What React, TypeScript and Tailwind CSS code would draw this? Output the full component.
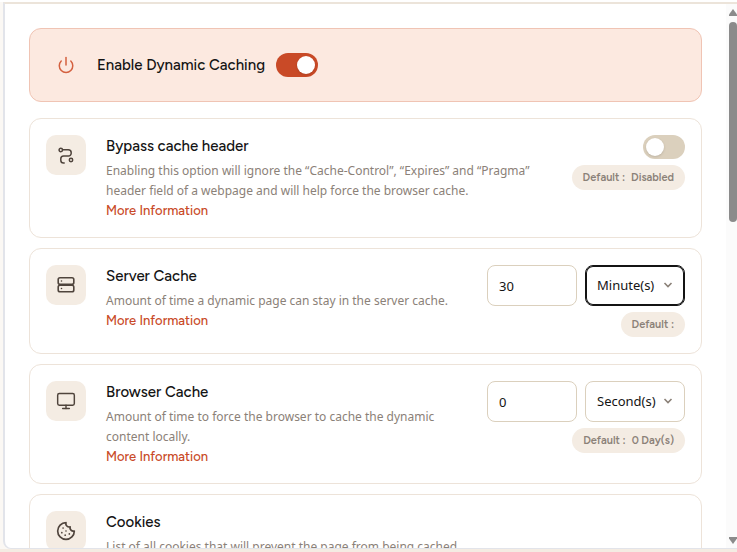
import React, { useState } from 'react';
import { Cookie, Monitor, Power } from 'lucide-react';

interface SettingCardProps {
  icon: React.ReactNode;
  title: string;
  description: string;
  children?: React.ReactNode;
}

const SettingCard: React.FC<SettingCardProps> = ({ icon, title, description, children }) => (
  <section className="flex items-start rounded-xl border border-[#ede3d9] bg-white p-4">
    <div className="flex size-10 shrink-0 items-center justify-center rounded-[10px] bg-[#f4ece3] text-[#4f443c]">
      {icon}
    </div>
    <div className="ml-5 min-w-0 flex-1">
      <h2 className="mb-1 font-[Figtree,Inter,sans-serif] text-[15px] leading-[22px] font-medium text-[#141414]">{title}</h2>
      <p className="font-['Noto_Sans',sans-serif] text-xs leading-5 text-[#8b8178]">{description}</p>
      <a href="#" className="block font-[Figtree,Inter,sans-serif] text-[13px] leading-5 font-medium text-[#c94a27]">
        More Information
      </a>
    </div>
    {children}
  </section>
);

interface ToggleProps {
  label: string;
  checked: boolean;
  onChange: (value: boolean) => void;
}

const Toggle: React.FC<ToggleProps> = ({ label, checked, onChange }) => (
  <input
    type="checkbox"
    role="switch"
    aria-label={label}
    checked={checked}
    onChange={(e) => onChange(e.target.checked)}
    className="flex h-6 w-[42px] shrink-0 cursor-pointer appearance-none items-center rounded-full bg-[#dbd0bd] px-[3px] before:size-[18px] before:rounded-full before:bg-white before:shadow-sm checked:justify-end checked:bg-[#c94a27]"
  />
);

const DefaultPill: React.FC<{ value?: string }> = ({ value }) => (
  <div className="flex h-[25px] items-center gap-1.5 rounded-full bg-[#f4ece3] px-[11px] pt-0.5 font-[Figtree,Inter,sans-serif] text-[11px] font-semibold text-[#8b8178]">
    <span>Default :</span>
    {value && <span>{value}</span>}
  </div>
);

interface DurationFieldProps {
  label: string;
  amount: string;
  unit: string;
  defaultValue?: string;
  active?: boolean;
}

const DurationField: React.FC<DurationFieldProps> = ({ label, amount, unit, defaultValue, active }) => (
  <div className="ml-6 flex shrink-0 flex-col items-end gap-1.5">
    <div className="flex gap-2">
      <input
        type="text"
        aria-label={label}
        defaultValue={amount}
        className="h-[41px] w-[90px] rounded-lg border border-[#dbd0bd] bg-white px-[11px] font-['Noto_Sans',sans-serif] text-[13px] text-[#141414]"
      />
      <div className="relative">
        <select
          aria-label={`${label} unit`}
          defaultValue={unit}
          className={`h-[41px] w-[100px] appearance-none rounded-lg border bg-white px-[11px] font-['Noto_Sans',sans-serif] text-[13px] text-[#141414] outline-none ${active ? 'border-[#141414] ring-1 ring-[#141414] ring-inset' : 'border-[#dbd0bd]'}`}
        >
          <option>Second(s)</option>
          <option>Minute(s)</option>
          <option>Hour(s)</option>
          <option>Day(s)</option>
        </select>
        <svg className="pointer-events-none absolute top-4 right-3 h-2 w-2.5" viewBox="0 0 10 8" fill="none" stroke="#8b8178" strokeWidth="1.6">
          <path d="M1.5 2 5 5.5 8.500 2" />
        </svg>
      </div>
    </div>
    <DefaultPill value={defaultValue} />
  </div>
);

const RouteIcon = () => (
  <svg className="size-5" viewBox="0 0 20 20" fill="none" stroke="currentColor" strokeWidth="1.5" strokeLinecap="round">
    <circle cx="4.800" cy="5" r="1.700" />
    <circle cx="15" cy="15" r="1.700" />
    <path d="M7 4.800h5.200a3 3 0 0 1 3 3v.4a2.800 2.800 0 0 1-2.800 2.800H7.600a2.800 2.800 0 0 0-2.800 2.800v1.400a2.800 2.800 0 0 0 2.800 2.800h.6" />
  </svg>
);

const ServerIcon = () => (
  <svg className="size-5" viewBox="0 0 20 20" fill="none" stroke="currentColor" strokeWidth="1.600" strokeLinecap="round">
    <rect x="2.200" y="2.700" width="15.600" height="6.600" rx="1.800" />
    <rect x="2.200" y="10.200" width="15.600" height="6.600" rx="1.800" />
    <path d="M5.500 6h.01M5.500 13.500h.01" />
  </svg>
);

export default function App() {
  const [enabled, setEnabled] = useState(true);
  const [bypass, setBypass] = useState(false);

  return (
    <div className="flex h-screen flex-col border-t-2 border-b-[3px] border-t-white border-b-[#f4ece3] bg-[#fbf8f4] pl-[3px]">
      <div className="flex min-h-0 flex-1 rounded-bl-lg border-t-2 border-b border-l-2 border-t-[#ece4da] border-b-[#e2e4ea] border-l-[#e2e4ea] bg-white">
        <main className="min-w-0 flex-1 overflow-hidden px-6 pt-6">
          <section className="flex h-[74px] items-center rounded-xl border border-[#f0c4b4] bg-[#fce9e0] pl-[27px]">
            <Power size={18} strokeWidth={2} className="text-[#d4603f]" />
            <h1 className="ml-[22px] font-[Figtree,Inter,sans-serif] text-[15px] font-medium text-[#141414]">
              Enable Dynamic Caching
            </h1>
            <div className="ml-[11px]">
              <Toggle label="Enable Dynamic Caching" checked={enabled} onChange={setEnabled} />
            </div>
          </section>

          <div className="mt-4 flex flex-col gap-2.5">
            <SettingCard
              icon={<RouteIcon />}
              title="Bypass cache header"
              description="Enabling this option will ignore the “Cache-Control”, “Expires” and “Pragma” header field of a webpage and will help force the browser cache."
            >
              <div className="ml-6 flex shrink-0 flex-col items-end gap-1.5">
                <Toggle label="Bypass cache header" checked={bypass} onChange={setBypass} />
                <DefaultPill value="Disabled" />
              </div>
            </SettingCard>

            <SettingCard
              icon={<ServerIcon />}
              title="Server Cache"
              description="Amount of time a dynamic page can stay in the server cache."
            >
              <DurationField label="Server cache time" amount="30" unit="Minute(s)" active />
            </SettingCard>

            <SettingCard
              icon={<Monitor size={20} strokeWidth={1.75} />}
              title="Browser Cache"
              description="Amount of time to force the browser to cache the dynamic content locally."
            >
              <DurationField label="Browser cache time" amount="0" unit="Second(s)" defaultValue="0 Day(s)" />
            </SettingCard>

            <SettingCard
              icon={<Cookie size={20} strokeWidth={2} />}
              title="Cookies"
              description="List of all cookies that will prevent the page from being cached."
            />
          </div>
        </main>

        {/* Scroll rail */}
        <div className="flex w-[11px] shrink-0 flex-col items-end overflow-hidden bg-[#fbfbfb] pt-[5px] pb-1" aria-hidden="true">
          <svg className="h-[7px] w-2" viewBox="0 0 8 7" fill="#8b8b8b">
            <path d="M4 0 8 5.500V7H0V5.500Z" />
          </svg>
          <div className="mt-1.5 h-[200px] w-2 rounded-full bg-[#8b8b8b]" />
          <svg className="mt-auto h-[7px] w-2" viewBox="0 0 8 7" fill="#8b8b8b">
            <path d="M4 7 8 1.500V0H0V1.500Z" />
          </svg>
        </div>
      </div>
    </div>
  );
}
